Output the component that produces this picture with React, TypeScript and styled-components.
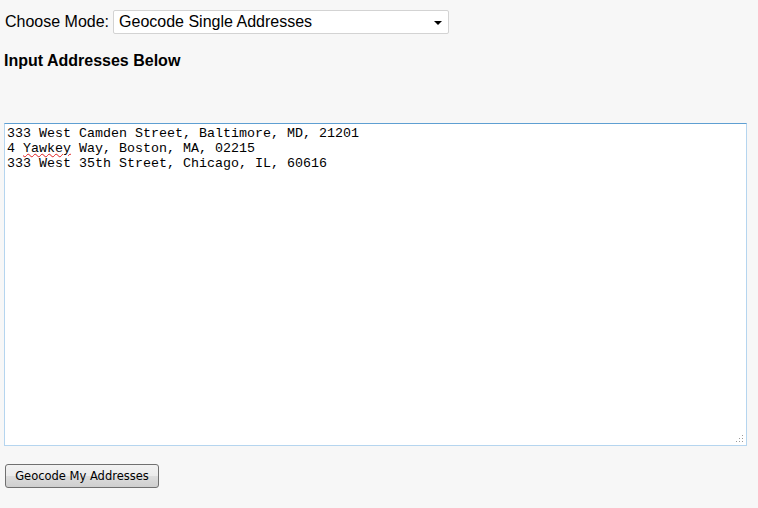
import styled, { createGlobalStyle } from 'styled-components'

const GlobalStyle = createGlobalStyle`
  html, body {
    margin: 0;
    padding: 0;
    background: #f7f7f7;
    font-family: 'Liberation Sans', Arial, sans-serif;
    color: #000;
  }
`

const Page = styled.div`
  display: flex;
  flex-direction: column;
  padding: 10px 12px 0 4px;
  width: 758px;
  height: 508px;
  box-sizing: border-box;
`

const ModeRow = styled.div`
  display: flex;
  align-items: center;
  gap: 4px;
  height: 24px;
  padding-left: 1px;
  font-size: 16px;
`

const SelectBox = styled.div`
  position: relative;
  display: flex;
  align-items: center;
  box-sizing: border-box;
  width: 336px;
  height: 24px;
  padding: 0 6px 1px 5px;
  background: #fff;
  border: 1px solid #d3d3d3;
  border-radius: 2px;
  font-size: 16px;
`

const Caret = styled.span`
  position: absolute;
  right: 6px;
  top: 10px;
  width: 0;
  height: 0;
  border-left: 4px solid transparent;
  border-right: 4px solid transparent;
  border-top: 4px solid #000;
`

const Heading = styled.h3`
  margin: 17px 0 0 0;
  font-size: 16px;
  font-weight: bold;
  line-height: 19px;
`

const TextArea = styled.div`
  position: relative;
  box-sizing: border-box;
  margin-top: 53px;
  width: 743px;
  height: 323px;
  padding: 2px 2px 1px;
  background: #fff;
  border: 1px solid #b5d5ef;
  border-top-color: #5e9fd2;
  font-family: 'Liberation Mono', 'Courier New', monospace;
  font-size: 13.33px;
  line-height: 15px;
  white-space: pre;
`

const Misspelled = styled.span`
  text-decoration: underline wavy #e02020;
  text-decoration-thickness: 1px;
  text-underline-offset: 1px;
`

const Grip = styled.svg`
  position: absolute;
  right: 2px;
  bottom: 2px;
`

const SubmitButton = styled.button`
  align-self: flex-start;
  margin: 18px 0 0 1px;
  box-sizing: border-box;
  width: 154px;
  height: 24px;
  padding: 0 0 1px;
  background: linear-gradient(#f2f2f2, #ebebeb 50%, #dddddd 51%, #cfcfcf);
  border: 1px solid #707070;
  border-radius: 3px;
  font-family: 'DejaVu Sans', Tahoma, sans-serif;
  font-size: 11.5px;
  color: #000;
`

export default function App() {
  return (
    <Page>
      <GlobalStyle />
      <ModeRow>
        <span>Choose Mode:</span>
        <SelectBox>
          Geocode Single Addresses
          <Caret />
        </SelectBox>
      </ModeRow>
      <Heading>Input Addresses Below</Heading>
      <TextArea>
        {'333 West Camden Street, Baltimore, MD, 21201\n4 '}
        <Misspelled>Yawkey</Misspelled>
        {' Way, Boston, MA, 02215\n333 West 35th Street, Chicago, IL, 60616'}
        <Grip width="8" height="8" viewBox="0 0 8 8">
          <rect x="6" y="0" width="1" height="1" fill="#999" />
          <rect x="3" y="3" width="1" height="1" fill="#999" />
          <rect x="6" y="3" width="1" height="1" fill="#999" />
          <rect x="0" y="6" width="1" height="1" fill="#999" />
          <rect x="3" y="6" width="1" height="1" fill="#999" />
          <rect x="6" y="6" width="1" height="1" fill="#999" />
        </Grip>
      </TextArea>
      <SubmitButton>Geocode My Addresses</SubmitButton>
    </Page>
  )
}
